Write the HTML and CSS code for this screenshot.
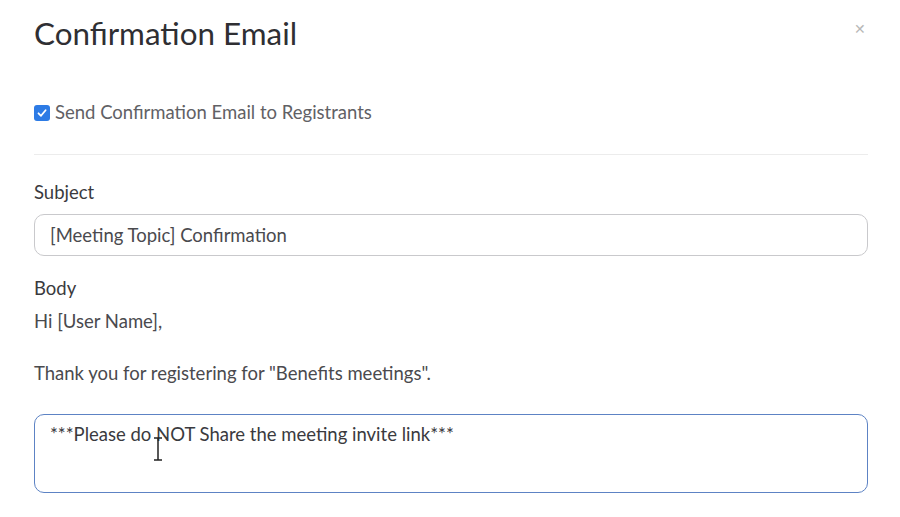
FILE: index.html
```html
<!DOCTYPE html>
<html>
<head>
<meta charset="utf-8">
<link rel="stylesheet" href="styles.css">
</head>
<body>
<div class="dialog">
  <div class="header">
    <h1 class="title">Confirmation Email</h1>
    <span class="close">&#x2715;</span>
  </div>
  <label class="check-row">
    <span class="checkbox">
      <svg width="12" height="12" viewBox="0 0 12 12"><path d="M2.5 6.3 L5 8.8 L9.6 3.2" fill="none" stroke="#fff" stroke-width="1.8" stroke-linecap="round" stroke-linejoin="round"/></svg>
    </span>
    <span class="check-label">Send Confirmation Email to Registrants</span>
  </label>
  <div class="divider"></div>
  <div class="label subject-label">Subject</div>
  <div class="input">[Meeting Topic] Confirmation</div>
  <div class="label body-label">Body</div>
  <p class="body-text">Hi [User Name],</p>
  <p class="body-text thanks">Thank you for registering for "Benefits meetings".</p>
  <div class="textarea">***Please do NOT Share the meeting invite link***
    <svg class="ibeam" width="10" height="24" viewBox="0 0 10 24"><path d="M1 1 H9 M5 1 V23 M1 23 H9" fill="none" stroke="#222" stroke-width="1.5"/></svg>
  </div>
</div>
</body>
</html>
```
FILE: styles.css
```css
html, body {
  margin: 0;
  padding: 0;
  background: #fff;
}
body {
  font-family: Lato, "Open Sans", sans-serif;
  color: #333;
}
.dialog {
  width: 834px;
  padding: 0 32px 0 34px;
}
.header {
  display: flex;
  justify-content: space-between;
  align-items: flex-start;
  height: 97px;
}
.title {
  margin: 13px 0 0;
  font-size: 31.4px;
  font-weight: 400;
  line-height: 40px;
  color: #2f2f33;
}
.close {
  margin: 19px 2px 0 0;
  font-size: 14px;
  color: #b8b8b8;
  line-height: 20px;
}
.check-row {
  display: flex;
  align-items: center;
  height: 30px;
}
.checkbox {
  width: 16px;
  height: 16px;
  border-radius: 3px;
  background: #2d7be5;
  display: flex;
  align-items: center;
  justify-content: center;
  margin: 2px 5px 0 0;
}
.check-label {
  font-size: 18.5px;
  color: #616165;
  line-height: 24px;
}
.divider {
  height: 1px;
  background: #ececec;
  margin-top: 27px;
}
.label {
  font-size: 18.5px;
  color: #3a3a3e;
  line-height: 24px;
}
.subject-label {
  margin-top: 25px;
}
.input {
  margin-top: 10px;
  height: 40px;
  border: 1px solid #c9c9cc;
  border-radius: 10px;
  padding: 0 15px;
  font-size: 18.5px;
  color: #4a4a4e;
  line-height: 40px;
}
.body-label {
  margin-top: 20px;
}
.body-text {
  margin: 9px 0 0;
  font-size: 18.5px;
  color: #4a4a4e;
  line-height: 24px;
}
.thanks {
  margin-top: 28px;
}
.textarea {
  position: relative;
  margin-top: 29px;
  height: 79px;
  border: 1px solid #5d83c4;
  border-radius: 10px;
  padding: 6px 15px 0;
  font-size: 18.5px;
  color: #3a3a3e;
  line-height: 26px;
  box-sizing: border-box;
}
.ibeam {
  position: absolute;
  left: 118px;
  top: 22px;
}
```
